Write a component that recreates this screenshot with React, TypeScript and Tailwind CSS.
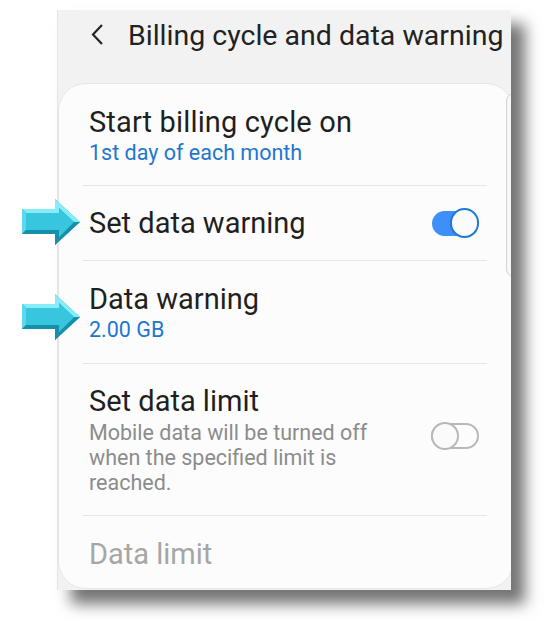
import React from "react";

function Arrow({ top }: { top: number }) {
  return (
    <svg
      className="absolute left-[20px]"
      style={{ top }}
      width="64"
      height="52"
      viewBox="0 0 64 52"
    >
      <polygon points="2,12 35,12 35,2 60,25 35,48 35,37 2,37" fill="#1fa9c4" />
      {/* top bevel */}
      <polygon points="2,12 35,12 35,2 60,25 54,25 39,11 39,16 6,16" fill="#86ecf8" />
      {/* left bevel */}
      <polygon points="2,12 6,16 6,33 2,37" fill="#5cd8ec" />
      {/* bottom bevel */}
      <polygon points="2,37 6,33 39,33 39,40 54,25 60,25 35,48 35,37" fill="#1690aa" />
      {/* face */}
      <polygon points="6,16 39,16 39,11 54,25 39,40 39,33 6,33" fill="#38c6de" />
    </svg>
  );
}

function ToggleOn() {
  return (
    <div className="relative w-[47px] h-[30px] flex items-center">
      <div className="w-[40px] h-[25px] rounded-full bg-[#3e8ff8]" />
      <div className="absolute right-0 top-0 w-[29px] h-[30px] rounded-full bg-[#fbfbfb] border-2 border-[#1f79d6]" />
    </div>
  );
}

function ToggleOff() {
  return (
    <div className="relative w-[48px] h-[28px] flex items-center">
      <div className="w-[48px] h-[26px] rounded-full border-2 border-[#b8b8b8]" />
      <div className="absolute left-0 top-0 w-[28px] h-[28px] rounded-full bg-[#fafafa] border-2 border-[#b8b8b8]" />
    </div>
  );
}

function Divider() {
  return <div className="h-px bg-[#e6e6e6] ml-[24px] mr-[26px]" />;
}

export default function App() {
  return (
    <div
      className="relative w-[550px] h-[621px] bg-white overflow-hidden"
      style={{ fontFamily: "Roboto, 'Noto Sans', sans-serif" }}
    >
      <div className="relative ml-[57px] mt-[10px] w-[454px] h-[580px] bg-[#f2f2f2] overflow-hidden shadow-[14px_14px_14px_rgba(0,0,0,0.55)] border-l border-[#e4e4e4]">
        {/* header */}
        <div className="h-[73px] flex items-start pt-[9px]">
          <svg className="ml-[32px] mt-[5px]" width="14" height="21" viewBox="0 0 14 21">
            <polyline points="12,1 3,10.5 12,20" fill="none" stroke="#252525" strokeWidth="2.2" />
          </svg>
          <span className="ml-[24px] text-[28.5px] leading-[34px] text-[#222] whitespace-nowrap">
            Billing cycle and data warning
          </span>
        </div>
        {/* card */}
        <div className="w-[456px] h-[506px] bg-[#fcfcfc] border border-[#e6e6e6] rounded-[28px] flex flex-col">
          <div className="h-[101px] flex flex-col justify-center pl-[30px] pt-[2px]">
            <div className="text-[29px] leading-[34px] text-[#1f1f1f] tracking-[0.15px]">Start billing cycle on</div>
            <div className="text-[21.5px] leading-[28px] text-[#1f76cf]">1st day of each month</div>
          </div>
          <Divider />
          <div className="h-[74px] flex items-center justify-between pl-[30px] pr-[34px]">
            <div className="text-[29px] leading-[34px] text-[#1f1f1f]">Set data warning</div>
            <ToggleOn />
          </div>
          <Divider />
          <div className="h-[102px] flex flex-col justify-center pl-[30px] pt-[2px]">
            <div className="text-[29px] leading-[34px] text-[#1f1f1f]">Data warning</div>
            <div className="text-[21.5px] leading-[28px] text-[#1f76cf]">2.00 GB</div>
          </div>
          <Divider />
          <div className="h-[151px] flex items-center justify-between pl-[30px] pr-[34px]">
            <div className="flex flex-col">
              <div className="text-[29px] leading-[34px] text-[#1f1f1f]">Set data limit</div>
              <div className="text-[21.5px] leading-[25px] text-[#8c8c8c] w-[320px] mt-[2px]">
                Mobile data will be turned off
                <br />
                when the specified limit is
                <br />
                reached.
              </div>
            </div>
            <div className="mb-[8px]">
              <ToggleOff />
            </div>
          </div>
          <Divider />
          <div className="flex-1 flex items-center pl-[30px] pt-[3px]">
            <div className="text-[29px] leading-[34px] text-[#a6a6a6]">Data limit</div>
          </div>
        </div>
        {/* scroll indicator */}
        <div className="absolute left-[448px] top-[83px] w-[10px] h-[184px] rounded-l-[8px] border border-[#d4d4d4] bg-[#f8f8f8]" />
      </div>
      <Arrow top={197} />
      <Arrow top={292} />
    </div>
  );
}
